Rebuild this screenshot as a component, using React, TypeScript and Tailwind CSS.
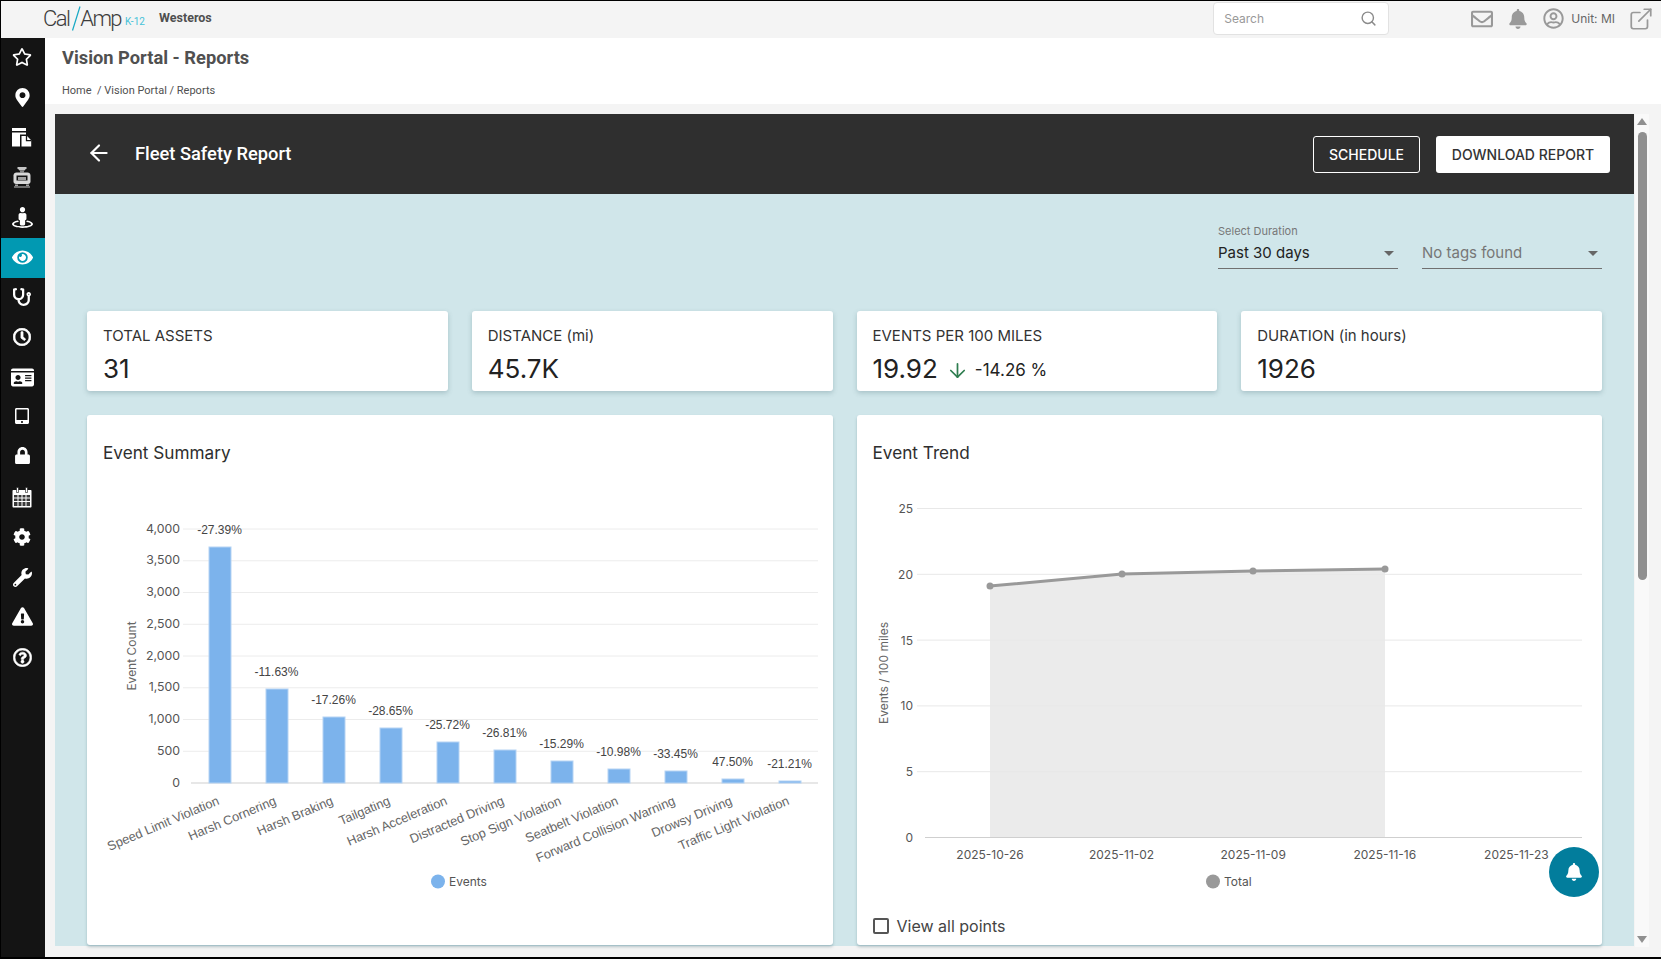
import React from "react";
import { ArrowDown, ArrowLeft, ExternalLink, Search } from "lucide-react";
import {
  FaBell,
  FaCog,
  FaExclamationTriangle,
  FaEye,
  FaIdCard,
  FaLock,
  FaMapMarkerAlt,
  FaRegClock,
  FaRegEnvelope,
  FaRegQuestionCircle,
  FaRegStar,
  FaRegUserCircle,
  FaStethoscope,
  FaStreetView,
  FaTabletAlt,
  FaWrench,
} from "react-icons/fa";

const FilesIcon = () => (
  <svg width="21" height="21" viewBox="0 0 21 21">
    <path d="M0 1h14v3H0z" fill="#fff" />
    <path d="M0 5.500h14v14H0z" fill="#fff" />
    <path d="M8 7.500h7.500L20.500 12.500v8.500H8z" fill="#141414" />
    <path d="M9.500 9h5.500l4.200 4.200V19.600H9.500z" fill="#fff" />
    <path d="M14.500 8.500v5.200h5.200" fill="none" stroke="#141414" strokeWidth="1.300" />
  </svg>
);

const TrainIcon = () => (
  <svg width="18" height="21" viewBox="0 0 18 21">
    <path d="M4.500 0h9v1.300l-2 2.200H6.500l-2-2.200z" fill="#c4c4c4" />
    <path d="M7 3.500h4v2H7z" fill="#8a8a8a" />
    <path d="M3.500 5.500h11c1.700 0 3 1.200 3 3v6c0 1.500-1 2.500-2.500 2.500H3c-1.500 0-2.500-1-2.500-2.500v-6c0-1.800 1.300-3 3-3z" fill="#d8d8d8" />
    <path d="M3.500 8.500h11v5h-11z" fill="#141414" />
    <path d="M5 10h8v3H5z" fill="#a0a0a0" />
    <path d="M2 17.500h3v1.500H2zM13 17.500h3v1.500h-3z" fill="#a0a0a0" />
    <path d="M1 19.500h16v1H1z" fill="#c4c4c4" />
  </svg>
);

const CalendarIcon = () => (
  <svg width="20" height="21" viewBox="0 0 20 21">
    <path d="M1.500 3h17c.6 0 1 .4 1 1v15.500c0 .6-.4 1-1 1h-17c-.6 0-1-.4-1-1V4c0-.6.4-1 1-1z" fill="#fff" />
    <path d="M4.500 0.500h2v5h-2zM13.500 0.500h2v5h-2z" fill="#fff" stroke="#141414" strokeWidth=".6" />
    <path
      d="M2 8h3.500v2.500H2zM6.500 8h3v2.500h-3zM10.500 8h3v2.500h-3zM14.500 8H18v2.500h-3.500zM2 11.500h3.500V14H2zM6.500 11.500h3V14h-3zM10.500 11.500h3V14h-3zM14.500 11.500H18V14h-3.500zM2 15h3.500v4H2zM6.500 15h3v4h-3zM10.500 15h3v4h-3zM14.500 15H18v4h-3.500z"
      fill="#3a3a3a"
    />
  </svg>
);

const navIcons: React.ReactNode[] = [
  <FaRegStar size={20} />,
  <FaMapMarkerAlt size={19} />,
  <FilesIcon />,
  <TrainIcon />,
  <FaStreetView size={21} />,
  <FaEye size={21} />,
  <FaStethoscope size={18} />,
  <FaRegClock size={18} stroke="currentColor" strokeWidth={24} />,
  <FaIdCard size={23} />,
  <FaTabletAlt size={16} className="-mt-[3px]" />,
  <FaLock size={17} className="-mt-[3px]" />,
  <CalendarIcon />,
  <FaCog size={18} />,
  <FaWrench size={19} />,
  <FaExclamationTriangle size={21} className="-mt-[1px]" />,
  <FaRegQuestionCircle size={19} stroke="currentColor" strokeWidth={16} />,
];

const stats = [
  { label: "TOTAL ASSETS", value: "31" },
  { label: "DISTANCE (mi)", value: "45.7K" },
  { label: "EVENTS PER 100 MILES", value: "19.92", change: "-14.26 %" },
  { label: "DURATION (in hours)", value: "1926" },
];

const bars = [
  { name: "Speed Limit Violation", pct: "-27.39%", top: 547 },
  { name: "Harsh Cornering", pct: "-11.63%", top: 689 },
  { name: "Harsh Braking", pct: "-17.26%", top: 717 },
  { name: "Tailgating", pct: "-28.65%", top: 728 },
  { name: "Harsh Acceleration", pct: "-25.72%", top: 742 },
  { name: "Distracted Driving", pct: "-26.81%", top: 750 },
  { name: "Stop Sign Violation", pct: "-15.29%", top: 761 },
  { name: "Seatbelt Violation", pct: "-10.98%", top: 769 },
  { name: "Forward Collision Warning", pct: "-33.45%", top: 771 },
  { name: "Drowsy Driving", pct: "47.50%", top: 779 },
  { name: "Traffic Light Violation", pct: "-21.21%", top: 781 },
];

const countTicks = ["4,000", "3,500", "3,000", "2,500", "2,000", "1,500", "1,000", "500", "0"];

const EventSummaryChart = () => (
  <svg viewBox="87 480 746 465" width="746" height="465" className="block">
    {countTicks.map((t, i) => {
      const y = 529 + i * 31.75;
      return (
        <g key={t}>
          <line x1={i === 8 ? 191 : 183} x2="818" y1={y} y2={y} stroke={i === 8 ? "#cfcfcf" : "#ececec"} />
          <text x="180" y={y + 3.5} textAnchor="end" fontSize="12.300" fill="#555" fontFamily="Inter, sans-serif">
            {t}
          </text>
        </g>
      );
    })}
    <text
      transform="translate(136 656) rotate(-90)"
      textAnchor="middle"
      fontSize="12"
      fill="#666"
      fontFamily="Inter, sans-serif"
    >
      Event Count
    </text>
    {bars.map((b, i) => {
      const cx = 220 + i * 57;
      return (
        <g key={b.name}>
          <rect x={cx - 11} y={b.top} width="22" height={783 - b.top} fill="#7cb3ec" stroke="#b5d3f4" strokeWidth="1" />
          <text x={cx - 0.5} y={b.top - 13} textAnchor="middle" fontSize="12" fill="#444" fontFamily="'Liberation Sans', sans-serif">
            {b.pct}
          </text>
          <text
            transform={`translate(${cx} 804) rotate(-23)`}
            textAnchor="end"
            fontSize="12.800"
            fill="#666"
            fontFamily="'Liberation Sans', sans-serif"
          >
            {b.name}
          </text>
        </g>
      );
    })}
    <circle cx="438" cy="881.500" r="7" fill="#7cb3ec" />
    <text x="449" y="886" fontSize="12" fill="#555" fontFamily="Inter, sans-serif">
      Events
    </text>
  </svg>
);

const trendPoints = [
  { x: 990, y: 586 },
  { x: 1122, y: 574 },
  { x: 1253, y: 571 },
  { x: 1385, y: 569 },
];
const dates = ["2025-10-26", "2025-11-02", "2025-11-09", "2025-11-16", "2025-11-23"];
const line = trendPoints.map((p) => `${p.x},${p.y}`).join(" ");

const EventTrendChart = () => (
  <svg viewBox="857 480 745 420" width="745" height="420" className="block">
    <polygon points={`990,838 ${line} 1385,838`} fill="#ebebeb" />
    {["25", "20", "15", "10", "5", "0"].map((t, i) => {
      const y = 508.500 + i * 65.800;
      return (
        <g key={t}>
          <line x1={i === 5 ? 925 : 917} x2="1582" y1={y} y2={y} stroke={i === 5 ? "#cfcfcf" : "#e8e8e8"} />
          <text x="913" y={y + 4.500} textAnchor="end" fontSize="12" fill="#555" fontFamily="Inter, sans-serif">
            {t}
          </text>
        </g>
      );
    })}
    <text
      transform="translate(888 673) rotate(-90)"
      textAnchor="middle"
      fontSize="12"
      fill="#666"
      fontFamily="Inter, sans-serif"
    >
      Events / 100 miles
    </text>
    <polyline points={line} fill="none" stroke="#999" strokeWidth="3" />
    {trendPoints.map((p) => (
      <circle key={p.x} cx={p.x} cy={p.y} r="3.500" fill="#999" />
    ))}
    {dates.map((d, i) => (
      <text key={d} x={990 + i * 131.600} y="859" textAnchor="middle" fontSize="12" fill="#555" fontFamily="Inter, sans-serif">
        {d}
      </text>
    ))}
    <circle cx="1213" cy="881.500" r="7" fill="#999" />
    <text x="1224" y="886" fontSize="12" fill="#555" fontFamily="Inter, sans-serif">
      Total
    </text>
  </svg>
);

const Caret = () => <span className="h-0 w-0 border-x-[5px] border-t-[5px] border-x-transparent border-t-[#666]" />;

export default function App() {
  return (
    <div className="relative flex h-[959px] w-[1661px] flex-col overflow-hidden border-t border-b-2 border-l border-black bg-[#f4f4f4] font-['Inter',sans-serif]">
      {/* top bar */}
      <header className="flex h-[37px] shrink-0 items-center pb-[2px]">
        <div className="ml-[42px] flex w-[94px] items-center whitespace-nowrap font-['Roboto',sans-serif] text-[22px] font-light tracking-[-1.600px] text-[#3c3c3c]">
          <span>Cal</span>
          <svg width="10" height="25" viewBox="0 0 10 25" className="mr-[-1px] ml-[2px] shrink-0">
            <line x1="9" y1="0.500" x2="1.500" y2="24.500" stroke="#16a8c4" strokeWidth="1.200" />
          </svg>
          <span>Amp</span>
          <span className="mt-[6px] ml-[4px] text-[10px] font-normal tracking-normal text-[#45c2d8]">K-12</span>
        </div>
        <span className="ml-[22px] font-['Roboto',sans-serif] text-[12.500px] font-bold text-[#4f4f4f]">Westeros</span>
        <div className="ml-auto flex h-[33px] w-[176px] items-center justify-between rounded border border-[#e2e2e2] bg-white pr-[11px] pl-[10px] text-[12px] text-[#999]">
          <span>Search</span>
          <Search size={17} strokeWidth={2} className="text-[#8a8a8a]" />
        </div>
        <div className="ml-[82px] flex items-center text-[#999]">
          <FaRegEnvelope size={22} />
          <FaBell size={20} className="ml-[15px]" />
          <FaRegUserCircle size={21} className="ml-[15px]" />
          <span className="ml-[7px] text-[12px] text-[#666]">Unit: MI</span>
          <ExternalLink size={26} strokeWidth={1.600} className="mr-[7px] ml-[13px]" />
        </div>
      </header>

      <div className="flex min-h-0 flex-1">
        {/* sidebar */}
        <nav className="flex w-[44px] shrink-0 flex-col bg-[#141414] text-white">
          {navIcons.map((icon, i) => (
            <div key={i} className={`flex h-[40px] items-center justify-center pr-[2px] pb-[2px] ${i === 5 ? "bg-[#0199b2]" : ""}`}>
              {icon}
            </div>
          ))}
        </nav>

        <main className="flex min-w-0 flex-1 flex-col">
          <div className="h-[66px] shrink-0 bg-white pl-[17px] font-['Roboto',sans-serif] text-[#505050]">
            <h1 className="pt-[7px] text-[18.300px] leading-[26px] font-bold">Vision Portal - Reports</h1>
            <p className="mt-[13px] text-[11px] leading-[14px]">Home&nbsp; / Vision Portal / Reports</p>
          </div>

          <div className="flex min-h-0 flex-1 pt-[10px] pl-[10px]">
            <div className="w-[1579px] shrink-0">
              <div className="flex h-[80px] items-center bg-[#2f2f2f] pr-[24px] pb-[1px] pl-[31px] text-white">
                <ArrowLeft size={26} strokeWidth={2} className="-mt-[2px]" />
                <h2 className="ml-[23px] font-['Roboto',sans-serif] text-[18.300px] font-medium">Fleet Safety Report</h2>
                <button className="mt-[1px] ml-auto h-[37px] w-[107px] rounded-[3px] border border-white text-[14px] font-medium">
                  SCHEDULE
                </button>
                <button className="mt-[1px] ml-[16px] h-[37px] w-[174px] rounded-[3px] bg-white text-[14px] font-medium text-[#333]">
                  DOWNLOAD REPORT
                </button>
              </div>

              <div className="h-[752px] bg-[#d0e6ea] px-[32px]">
                <div className="flex justify-end gap-[24px] pt-[31px]">
                  <div className="flex h-[44px] w-[180px] flex-col border-b border-[#707070]">
                    <span className="text-[11px] leading-[13px] text-[#777]">Select Duration</span>
                    <div className="mt-[5px] flex items-center justify-between pr-[4px] text-[15px] leading-[20px] text-[#222]">
                      Past 30 days <Caret />
                    </div>
                  </div>
                  <div className="flex h-[44px] w-[180px] flex-col border-b border-[#707070]">
                    <span className="h-[13px]" />
                    <div className="mt-[5px] flex items-center justify-between pr-[4px] text-[15px] leading-[20px] text-[#777]">
                      No tags found <Caret />
                    </div>
                  </div>
                </div>

                <div className="mt-[42px] grid grid-cols-4 gap-x-[24px]">
                  {stats.map((s) => (
                    <div key={s.label} className="h-[80px] rounded-[3px] bg-white px-[16px] pt-[16px] shadow-[0_2px_5px_rgba(70,110,120,0.3)]">
                      <div className="text-[15px] leading-[18px] text-[#333]">{s.label}</div>
                      <div className="mt-[8px] flex items-center text-[#222]">
                        <span className="text-[26px] leading-[32px]">{s.value}</span>
                        {s.change && (
                          <>
                            <ArrowDown size={23} strokeWidth={1.800} className="mt-[3px] ml-[8px] text-[#2e7d4f]" />
                            <span className="mt-[3px] ml-[6px] text-[17px]">{s.change}</span>
                          </>
                        )}
                      </div>
                    </div>
                  ))}
                </div>

                <div className="mt-[24px] grid h-[530px] grid-cols-2 gap-x-[24px]">
                  <section className="rounded-[3px] bg-white shadow-[0_2px_3px_rgba(70,110,120,0.35)]">
                    <h3 className="h-[65px] px-[16px] pt-[27px] text-[17.200px] leading-[22px] text-[#2e2e2e]">Event Summary</h3>
                    <EventSummaryChart />
                  </section>
                  <section className="rounded-[3px] bg-white shadow-[0_2px_3px_rgba(70,110,120,0.35)]">
                    <h3 className="h-[65px] px-[16px] pt-[27px] text-[17.200px] leading-[22px] text-[#2e2e2e]">Event Trend</h3>
                    <EventTrendChart />
                    <label className="mt-[14px] flex items-center pl-[16px] text-[16px] leading-[24px] text-[#444]">
                      <span className="h-[16px] w-[16px] rounded-[2px] border-2 border-[#555]" />
                      <span className="ml-[8px]">View all points</span>
                    </label>
                  </section>
                </div>
              </div>
            </div>

            {/* scrollbar */}
            <div className="ml-[1px] flex h-[833px] w-[14px] flex-col items-center bg-[#f9f9f9] pt-[4px]">
              <span className="h-0 w-0 border-x-[5px] border-b-[7px] border-x-transparent border-b-[#909090]" />
              <span className="mt-[7px] h-[448px] w-[9px] rounded-full bg-[#909090]" />
              <span className="mt-auto mb-[4px] h-0 w-0 border-x-[5px] border-t-[7px] border-x-transparent border-t-[#909090]" />
            </div>
          </div>
        </main>
      </div>

      {/* floating alerts button */}
      <button className="absolute top-[846px] left-[1548px] flex h-[50px] w-[50px] items-center justify-center rounded-full bg-[#027d9c] text-white">
        <FaBell size={18} />
      </button>
    </div>
  );
}
